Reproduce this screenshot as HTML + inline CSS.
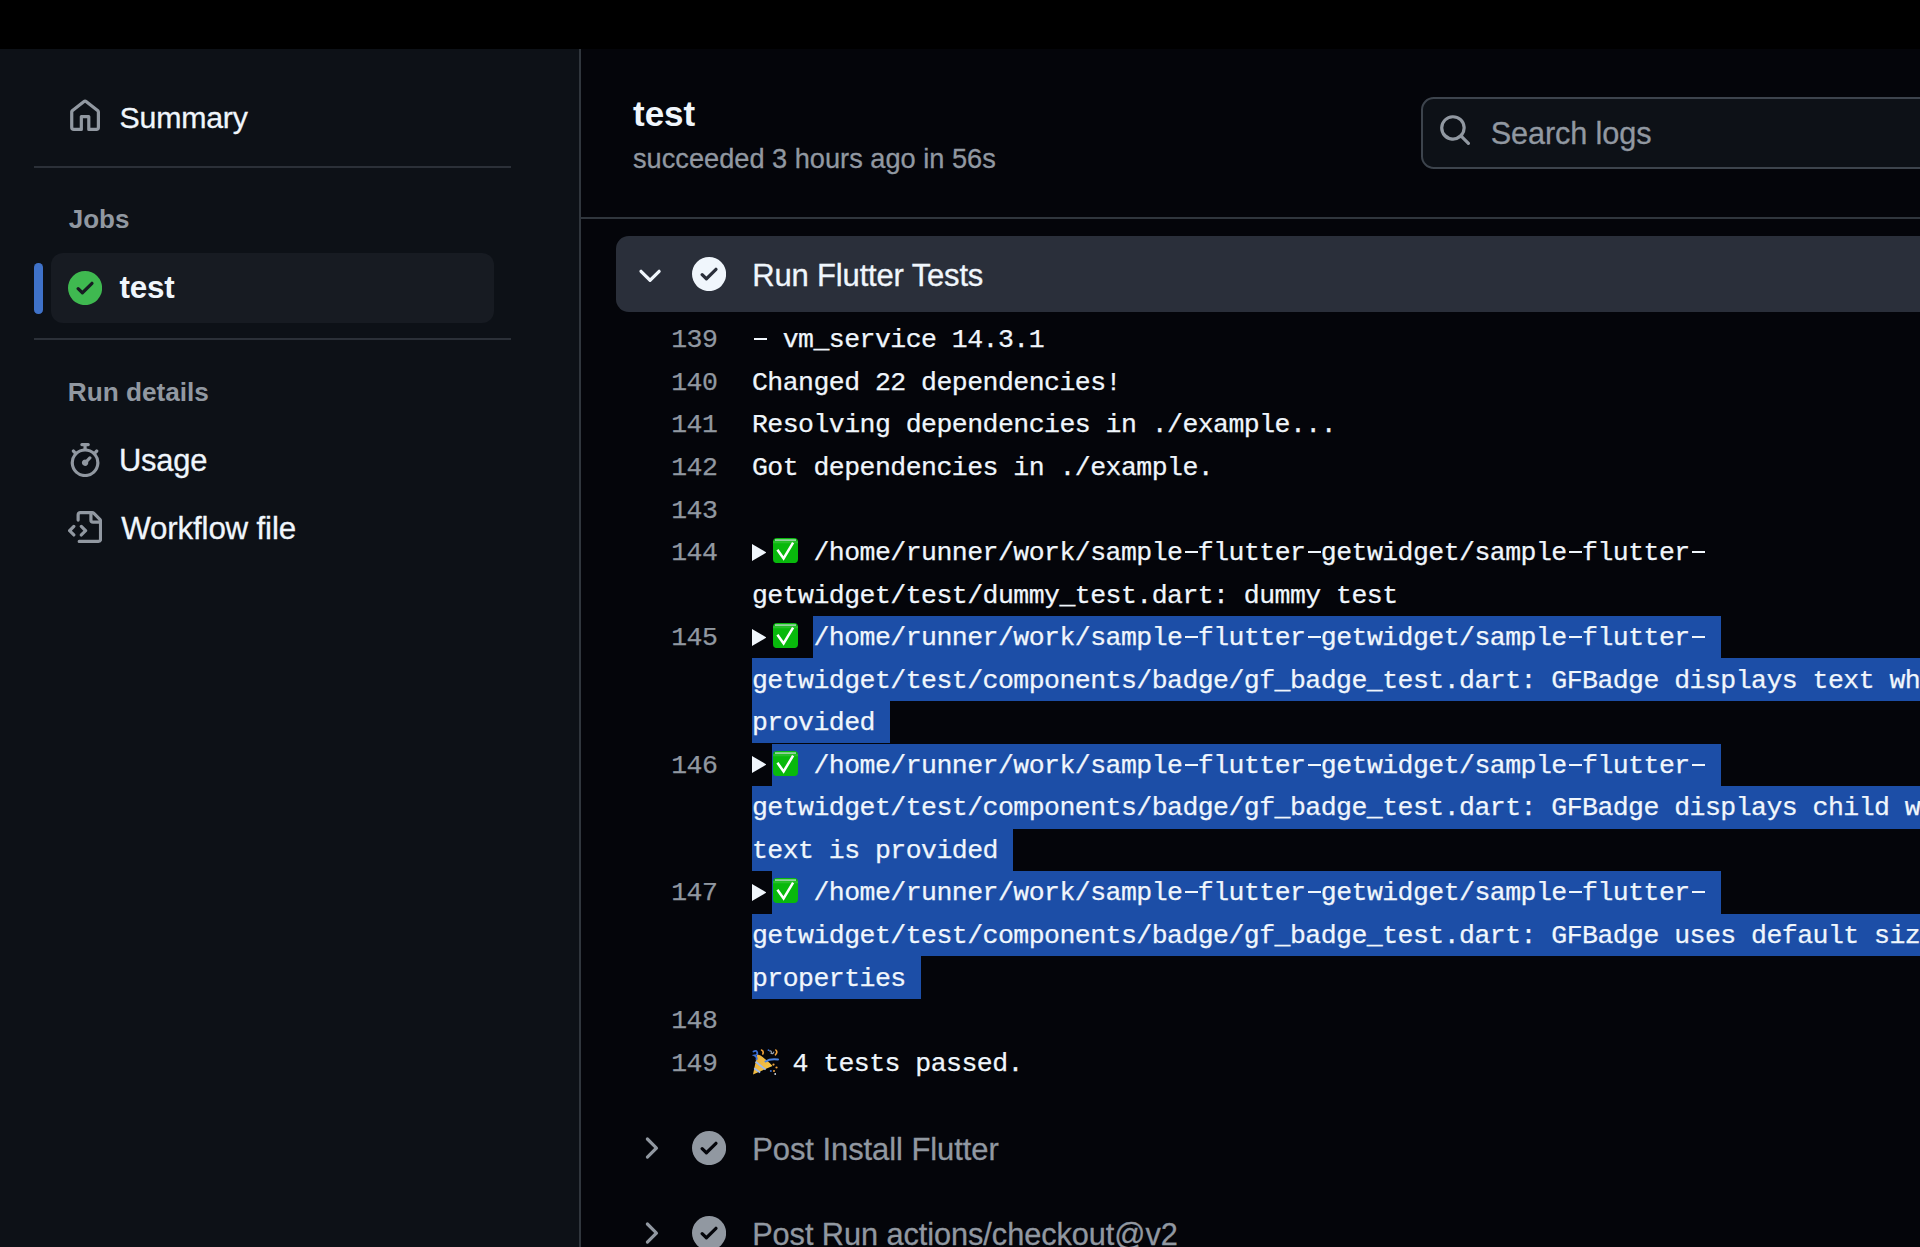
<!DOCTYPE html>
<html><head><meta charset="utf-8"><title>test</title>
<style>
html,body{margin:0;padding:0;}
body{width:1920px;height:1247px;position:relative;overflow:hidden;background:#04050a;font-family:"Liberation Sans", sans-serif;-webkit-font-smoothing:antialiased;}
.t{position:absolute;white-space:pre;}
.S{font-family:"Liberation Sans", sans-serif;-webkit-text-stroke:0.3px currentColor;}
.SB{font-family:"Liberation Sans", sans-serif;}
.M{font-family:"Liberation Mono", monospace;letter-spacing:-0.532px;-webkit-text-stroke:0.25px currentColor;}
.r{position:absolute;}
.h{position:relative;color:transparent;-webkit-text-stroke:0;}
.h::after{content:'';position:absolute;left:2.4px;width:13px;height:2.1px;top:13.0px;background:#f0f6fc;}
</style></head><body>
<div class="r" style="left:0.00px;top:0.00px;width:1920.00px;height:49.00px;background:#000000;border-radius:0px;"></div>
<div class="r" style="left:0.00px;top:49.00px;width:579.00px;height:1198.00px;background:#0d1117;border-radius:0px;"></div>
<div class="r" style="left:579.00px;top:49.00px;width:2.00px;height:1198.00px;background:#30363d;border-radius:0px;"></div>
<svg class="r" style="left:67.90px;top:98.60px;" width="34.13" height="34.13" viewBox="0 0 16 16"><path fill="#9198a1" d="M6.906.664a1.749 1.749 0 0 1 2.187 0l5.25 4.2c.415.332.657.835.657 1.367v7.019A1.75 1.75 0 0 1 13.25 15h-3.5a.75.75 0 0 1-.75-.75V9H7v5.25a.75.75 0 0 1-.75.75h-3.5A1.75 1.75 0 0 1 1 13.25V6.23c0-.531.242-1.034.657-1.366l5.25-4.2Zm1.25 1.171a.25.25 0 0 0-.312 0l-5.25 4.2a.25.25 0 0 0-.094.196v7.019c0 .138.112.25.25.25H5.5V8.25a.75.75 0 0 1 .75-.75h3.5a.75.75 0 0 1 .75.75v5.25h2.75a.25.25 0 0 0 .25-.25V6.23a.25.25 0 0 0-.094-.195Z"/></svg>
<div class="t S" style="left:119.60px;top:98px;font-size:30.3px;line-height:39px;color:#f0f6fc;font-weight:400;letter-spacing:-0.24px;">Summary</div>
<div class="r" style="left:34.00px;top:166.00px;width:477.00px;height:2.00px;background:#2b3038;border-radius:0px;"></div>
<div class="t SB" style="left:68.70px;top:202px;font-size:26px;line-height:34px;color:#9198a1;font-weight:700;">Jobs</div>
<div class="r" style="left:51.30px;top:253.40px;width:442.70px;height:69.60px;background:#171b22;border-radius:12px;"></div>
<div class="r" style="left:34.00px;top:263.00px;width:8.70px;height:50.80px;background:#3f72c9;border-radius:4.3px;"></div>
<svg class="r" style="left:68.00px;top:271.00px;" width="34.13" height="34.13" viewBox="0 0 16 16"><path fill="#3fb950" d="M8 16A8 8 0 1 1 8 0a8 8 0 0 1 0 16Zm3.78-9.72a.751.751 0 0 0-.018-1.042.751.751 0 0 0-1.042-.018L6.75 9.19 5.28 7.72a.751.751 0 0 0-1.042.018.751.751 0 0 0-.018 1.042l2 2a.75.75 0 0 0 1.06 0Z"/></svg>
<div class="t SB" style="left:119.60px;top:267px;font-size:31.4px;line-height:41px;color:#f0f6fc;font-weight:700;letter-spacing:-0.2px;">test</div>
<div class="r" style="left:34.00px;top:338.00px;width:477.00px;height:2.00px;background:#2b3038;border-radius:0px;"></div>
<div class="t SB" style="left:67.75px;top:375px;font-size:26.2px;line-height:34px;color:#9198a1;font-weight:700;">Run details</div>
<svg class="r" style="left:67.90px;top:442.70px;" width="34.13" height="34.13" viewBox="0 0 16 16"><path fill="#9198a1" d="M5.75.75A.75.75 0 0 1 6.5 0h3a.75.75 0 0 1 0 1.5h-.75v1l-.001.041a6.724 6.724 0 0 1 3.464 1.435l.007-.006.75-.75a.749.749 0 0 1 1.275.326.749.749 0 0 1-.215.734l-.75.75-.006.007a6.75 6.75 0 1 1-10.548 0L2.72 5.03l-.75-.75a.751.751 0 0 1 .018-1.042.751.751 0 0 1 1.042-.018l.75.75.007.006A6.72 6.72 0 0 1 7.25 2.541V1.5H6.5a.75.75 0 0 1-.75-.75ZM8 14.5a5.25 5.25 0 1 0-.001-10.501A5.25 5.25 0 0 0 8 14.5Zm.389-6.7 1.33-1.33a.75.75 0 1 1 1.061 1.06L9.45 8.861A1.503 1.503 0 0 1 8 10.75a1.499 1.499 0 1 1 .389-2.95Z"/></svg>
<div class="t S" style="left:119.00px;top:441px;font-size:30.9px;line-height:40px;color:#f0f6fc;font-weight:400;letter-spacing:-0.2px;">Usage</div>
<svg class="r" style="left:67.90px;top:511.00px;" width="34.13" height="34.13" viewBox="0 0 16 16"><path fill="#9198a1" d="M4 1.75C4 .784 4.784 0 5.75 0h5.586c.464 0 .909.184 1.237.513l2.914 2.914c.329.328.513.773.513 1.237v8.586A1.75 1.75 0 0 1 14.25 15h-9a.75.75 0 0 1 0-1.5h9a.25.25 0 0 0 .25-.25V6h-2.75A1.75 1.75 0 0 1 10 4.25V1.5H5.75a.25.25 0 0 0-.25.25v2.5a.75.75 0 0 1-1.5 0Zm1.72 4.97a.75.75 0 0 1 1.06 0l2 2a.75.75 0 0 1 0 1.06l-2 2a.749.749 0 0 1-1.275-.326.749.749 0 0 1 .215-.734l1.47-1.47-1.47-1.47a.75.75 0 0 1 0-1.06ZM3.28 7.78 1.81 9.25l1.47 1.47a.751.751 0 0 1-.018 1.042.751.751 0 0 1-1.042.018l-2-2a.75.75 0 0 1 0-1.06l2-2a.751.751 0 0 1 1.042.018.751.751 0 0 1 .018 1.042Zm8.22-6.218V4.25c0 .138.112.25.25.25h2.688l-.011-.013-2.914-2.914-.013-.011Z"/></svg>
<div class="t S" style="left:121.30px;top:508px;font-size:31.3px;line-height:41px;color:#f0f6fc;font-weight:400;letter-spacing:-0.17px;">Workflow file</div>
<div class="t SB" style="left:633.00px;top:91px;font-size:35px;line-height:46px;color:#f0f6fc;font-weight:700;">test</div>
<div class="t S" style="left:633.00px;top:141px;font-size:27.2px;line-height:35px;color:#9198a1;font-weight:400;">succeeded 3 hours ago in 56s</div>
<div class="r" style="left:1421.00px;top:96.80px;width:700.00px;height:71.80px;background:#0d1117;border-radius:12.8px;box-sizing:border-box;border:2px solid #3d444d;"></div>
<svg class="r" style="left:1437.50px;top:113.30px;" width="34.13" height="34.13" viewBox="0 0 16 16"><path fill="#9198a1" d="M10.68 11.74a6 6 0 0 1-7.922-8.982 6 6 0 0 1 8.982 7.922l3.04 3.04a.749.749 0 0 1-.326 1.275.749.749 0 0 1-.734-.215ZM11.5 7a4.499 4.499 0 1 0-8.997 0A4.499 4.499 0 0 0 11.5 7Z"/></svg>
<div class="t S" style="left:1490.70px;top:114px;font-size:30.7px;line-height:40px;color:#9198a1;font-weight:400;letter-spacing:-0.12px;">Search logs</div>
<div class="r" style="left:581.00px;top:217.00px;width:1339.00px;height:2.00px;background:#30363d;border-radius:0px;"></div>
<div class="r" style="left:616.00px;top:236.00px;width:1400.00px;height:76.00px;background:#2a2f3a;border-radius:12.8px;"></div>
<svg class="r" style="left:632.50px;top:259.00px;" width="34.13" height="34.13" viewBox="0 0 16 16"><path fill="#f0f6fc" d="M12.78 5.22a.749.749 0 0 1 0 1.06l-4.25 4.25a.749.749 0 0 1-1.06 0L3.22 6.28a.749.749 0 0 1 .326-1.275.749.749 0 0 1 .734.215L8 8.939l3.72-3.719a.749.749 0 0 1 1.06 0Z"/></svg>
<svg class="r" style="left:692.00px;top:257.00px;" width="34.13" height="34.13" viewBox="0 0 16 16"><path fill="#f0f6fc" d="M8 16A8 8 0 1 1 8 0a8 8 0 0 1 0 16Zm3.78-9.72a.751.751 0 0 0-.018-1.042.751.751 0 0 0-1.042-.018L6.75 9.19 5.28 7.72a.751.751 0 0 0-1.042.018.751.751 0 0 0-.018 1.042l2 2a.75.75 0 0 0 1.06 0Z"/></svg>
<div class="t S" style="left:752.30px;top:256px;font-size:31px;line-height:40px;color:#f0f6fc;font-weight:400;letter-spacing:-0.17px;">Run Flutter Tests</div>
<div class="t M" style="left:600.00px;top:323px;font-size:26.5px;line-height:34px;color:#9198a1;font-weight:400;width:117.3px;text-align:right;">139</div>
<div class="t M" style="left:752.00px;top:323px;font-size:26.5px;line-height:34px;color:#f0f6fc;font-weight:400;"><span class="h">-</span> vm_service 14.3.1</div>
<div class="t M" style="left:600.00px;top:366px;font-size:26.5px;line-height:34px;color:#9198a1;font-weight:400;width:117.3px;text-align:right;">140</div>
<div class="t M" style="left:752.00px;top:366px;font-size:26.5px;line-height:34px;color:#f0f6fc;font-weight:400;">Changed 22 dependencies!</div>
<div class="t M" style="left:600.00px;top:408px;font-size:26.5px;line-height:34px;color:#9198a1;font-weight:400;width:117.3px;text-align:right;">141</div>
<div class="t M" style="left:752.00px;top:408px;font-size:26.5px;line-height:34px;color:#f0f6fc;font-weight:400;">Resolving dependencies in ./example...</div>
<div class="t M" style="left:600.00px;top:451px;font-size:26.5px;line-height:34px;color:#9198a1;font-weight:400;width:117.3px;text-align:right;">142</div>
<div class="t M" style="left:752.00px;top:451px;font-size:26.5px;line-height:34px;color:#f0f6fc;font-weight:400;">Got dependencies in ./example.</div>
<div class="t M" style="left:600.00px;top:494px;font-size:26.5px;line-height:34px;color:#9198a1;font-weight:400;width:117.3px;text-align:right;">143</div>
<div class="t M" style="left:600.00px;top:536px;font-size:26.5px;line-height:34px;color:#9198a1;font-weight:400;width:117.3px;text-align:right;">144</div>
<svg class="r" style="left:751.7px;top:543.50px" width="14.5" height="17" viewBox="0 0 14.5 17"><path fill="#f0f6fc" d="M0 0L14.5 8.5L0 17Z"/></svg>
<svg class="r" style="left:772.8px;top:538.00px" width="25" height="25.2" viewBox="0 0 25 25"><rect x="0" y="0" width="25" height="25" rx="4" fill="#08b90c"/><rect x="2" y="1.2" width="21" height="1.6" fill="#d9dde6" opacity="0.75"/><rect x="0" y="3" width="25" height="2.2" fill="#3cc43e" opacity="0.6"/><path d="M4.4 11.6L10.6 20.4L20.1 4.6" stroke="#fff" stroke-width="2.5" fill="none" stroke-linejoin="miter"/></svg>
<div class="t M" style="left:813.50px;top:536px;font-size:26.5px;line-height:34px;color:#f0f6fc;font-weight:400;">/home/runner/work/sample<span class="h">-</span>flutter<span class="h">-</span>getwidget/sample<span class="h">-</span>flutter<span class="h">-</span></div>
<div class="t M" style="left:752.00px;top:579px;font-size:26.5px;line-height:34px;color:#f0f6fc;font-weight:400;">getwidget/test/dummy_test.dart: dummy test</div>
<div class="r" style="left:813.00px;top:615.85px;width:908.00px;height:42.55px;background:#1c4ea7;border-radius:0px;"></div>
<div class="t M" style="left:600.00px;top:621px;font-size:26.5px;line-height:34px;color:#9198a1;font-weight:400;width:117.3px;text-align:right;">145</div>
<svg class="r" style="left:751.7px;top:628.60px" width="14.5" height="17" viewBox="0 0 14.5 17"><path fill="#f0f6fc" d="M0 0L14.5 8.5L0 17Z"/></svg>
<svg class="r" style="left:772.8px;top:623.10px" width="25" height="25.2" viewBox="0 0 25 25"><rect x="0" y="0" width="25" height="25" rx="4" fill="#08b90c"/><rect x="2" y="1.2" width="21" height="1.6" fill="#d9dde6" opacity="0.75"/><rect x="0" y="3" width="25" height="2.2" fill="#3cc43e" opacity="0.6"/><path d="M4.4 11.6L10.6 20.4L20.1 4.6" stroke="#fff" stroke-width="2.5" fill="none" stroke-linejoin="miter"/></svg>
<div class="t M" style="left:813.50px;top:621px;font-size:26.5px;line-height:34px;color:#f0f6fc;font-weight:400;">/home/runner/work/sample<span class="h">-</span>flutter<span class="h">-</span>getwidget/sample<span class="h">-</span>flutter<span class="h">-</span></div>
<div class="r" style="left:752.00px;top:658.40px;width:1168.00px;height:42.55px;background:#1c4ea7;border-radius:0px;"></div>
<div class="t M" style="left:752.00px;top:664px;font-size:26.5px;line-height:34px;color:#f0f6fc;font-weight:400;">getwidget/test/components/badge/gf_badge_test.dart: GFBadge displays text when</div>
<div class="r" style="left:752.00px;top:700.95px;width:138.30px;height:42.55px;background:#1c4ea7;border-radius:0px;"></div>
<div class="t M" style="left:752.00px;top:706px;font-size:26.5px;line-height:34px;color:#f0f6fc;font-weight:400;">provided</div>
<div class="r" style="left:772.40px;top:743.50px;width:948.60px;height:42.55px;background:#1c4ea7;border-radius:0px;"></div>
<div class="t M" style="left:600.00px;top:749px;font-size:26.5px;line-height:34px;color:#9198a1;font-weight:400;width:117.3px;text-align:right;">146</div>
<svg class="r" style="left:751.7px;top:756.25px" width="14.5" height="17" viewBox="0 0 14.5 17"><path fill="#f0f6fc" d="M0 0L14.5 8.5L0 17Z"/></svg>
<svg class="r" style="left:772.8px;top:750.75px" width="25" height="25.2" viewBox="0 0 25 25"><rect x="0" y="0" width="25" height="25" rx="4" fill="#08b90c"/><rect x="2" y="1.2" width="21" height="1.6" fill="#d9dde6" opacity="0.75"/><rect x="0" y="3" width="25" height="2.2" fill="#3cc43e" opacity="0.6"/><path d="M4.4 11.6L10.6 20.4L20.1 4.6" stroke="#fff" stroke-width="2.5" fill="none" stroke-linejoin="miter"/></svg>
<div class="t M" style="left:813.50px;top:749px;font-size:26.5px;line-height:34px;color:#f0f6fc;font-weight:400;">/home/runner/work/sample<span class="h">-</span>flutter<span class="h">-</span>getwidget/sample<span class="h">-</span>flutter<span class="h">-</span></div>
<div class="r" style="left:752.00px;top:786.05px;width:1168.00px;height:42.55px;background:#1c4ea7;border-radius:0px;"></div>
<div class="t M" style="left:752.00px;top:791px;font-size:26.5px;line-height:34px;color:#f0f6fc;font-weight:400;">getwidget/test/components/badge/gf_badge_test.dart: GFBadge displays child when</div>
<div class="r" style="left:752.00px;top:828.60px;width:261.30px;height:42.55px;background:#1c4ea7;border-radius:0px;"></div>
<div class="t M" style="left:752.00px;top:834px;font-size:26.5px;line-height:34px;color:#f0f6fc;font-weight:400;">text is provided</div>
<div class="r" style="left:772.40px;top:871.15px;width:948.60px;height:42.55px;background:#1c4ea7;border-radius:0px;"></div>
<div class="t M" style="left:600.00px;top:876px;font-size:26.5px;line-height:34px;color:#9198a1;font-weight:400;width:117.3px;text-align:right;">147</div>
<svg class="r" style="left:751.7px;top:883.90px" width="14.5" height="17" viewBox="0 0 14.5 17"><path fill="#f0f6fc" d="M0 0L14.5 8.5L0 17Z"/></svg>
<svg class="r" style="left:772.8px;top:878.40px" width="25" height="25.2" viewBox="0 0 25 25"><rect x="0" y="0" width="25" height="25" rx="4" fill="#08b90c"/><rect x="2" y="1.2" width="21" height="1.6" fill="#d9dde6" opacity="0.75"/><rect x="0" y="3" width="25" height="2.2" fill="#3cc43e" opacity="0.6"/><path d="M4.4 11.6L10.6 20.4L20.1 4.6" stroke="#fff" stroke-width="2.5" fill="none" stroke-linejoin="miter"/></svg>
<div class="t M" style="left:813.50px;top:876px;font-size:26.5px;line-height:34px;color:#f0f6fc;font-weight:400;">/home/runner/work/sample<span class="h">-</span>flutter<span class="h">-</span>getwidget/sample<span class="h">-</span>flutter<span class="h">-</span></div>
<div class="r" style="left:752.00px;top:913.70px;width:1168.00px;height:42.55px;background:#1c4ea7;border-radius:0px;"></div>
<div class="t M" style="left:752.00px;top:919px;font-size:26.5px;line-height:34px;color:#f0f6fc;font-weight:400;">getwidget/test/components/badge/gf_badge_test.dart: GFBadge uses default size</div>
<div class="r" style="left:752.00px;top:956.25px;width:169.10px;height:42.55px;background:#1c4ea7;border-radius:0px;"></div>
<div class="t M" style="left:752.00px;top:962px;font-size:26.5px;line-height:34px;color:#f0f6fc;font-weight:400;">properties</div>
<div class="t M" style="left:600.00px;top:1004px;font-size:26.5px;line-height:34px;color:#9198a1;font-weight:400;width:117.3px;text-align:right;">148</div>
<div class="t M" style="left:600.00px;top:1047px;font-size:26.5px;line-height:34px;color:#9198a1;font-weight:400;width:117.3px;text-align:right;">149</div>
<svg class="r" style="left:751.7px;top:1049.00px" width="27" height="26" viewBox="0 0 27 26"><defs><linearGradient id="pg" x1="0" y1="0" x2="1" y2="1"><stop offset="0" stop-color="#e9a93a"/><stop offset="1" stop-color="#f7cf4a"/></linearGradient></defs><path fill="url(#pg)" d="M1 25.5L5.2 5.2Q9 6 13 10Q17.5 13.5 20.5 17Z"/><path fill="none" stroke="#9db9ec" stroke-width="1.8" d="M3.6 12.8L13.6 20.6M2.2 19.2L8.2 23.4"/><path fill="none" stroke="#3b6fd6" stroke-width="1.8" stroke-linecap="round" d="M1.5 2.5Q4.5 0.8 5.2 3.5Q5.8 6 2.5 6.5Q5.5 8 4.5 10.5"/><path fill="none" stroke="#f0a23a" stroke-width="1.6" stroke-linecap="round" d="M9.5 1Q12 2.2 10.8 5"/><path fill="none" stroke="#9aa3b0" stroke-width="1.2" stroke-linecap="round" d="M17.5 2Q20 1.5 19.2 4.5Q21.5 5 21.8 3"/><path fill="none" stroke="#f0a23a" stroke-width="1.6" stroke-linecap="round" d="M23.8 1Q26 3 23.5 5.8"/><path fill="none" stroke="#4a82e0" stroke-width="2" stroke-linecap="round" d="M13.5 12.5Q18 9.5 26 10.5"/><circle cx="21.5" cy="15.6" r="1.1" fill="#f0a23a"/><circle cx="24.5" cy="18.5" r="1.1" fill="#f0a23a"/><circle cx="22" cy="22" r="1" fill="#f0a23a"/><circle cx="18.8" cy="22" r="1" fill="#3b6fd6"/><circle cx="23.2" cy="25" r="0.9" fill="#d8dce4"/><circle cx="16.5" cy="1.2" r="0.9" fill="#3b6fd6"/></svg>
<div class="t M" style="left:792.40px;top:1047px;font-size:26.5px;line-height:34px;color:#f0f6fc;font-weight:400;">4 tests passed.</div>
<svg class="r" style="left:633.00px;top:1131.00px;" width="34.13" height="34.13" viewBox="0 0 16 16"><path fill="#9198a1" d="M6.22 3.22a.75.75 0 0 1 1.06 0l4.25 4.25a.75.75 0 0 1 0 1.06l-4.25 4.25a.751.751 0 0 1-1.042-.018.751.751 0 0 1-.018-1.042L9.94 8 6.22 4.28a.75.75 0 0 1 0-1.06Z"/></svg>
<svg class="r" style="left:692.00px;top:1131.00px;" width="34.13" height="34.13" viewBox="0 0 16 16"><path fill="#9198a1" d="M8 16A8 8 0 1 1 8 0a8 8 0 0 1 0 16Zm3.78-9.72a.751.751 0 0 0-.018-1.042.751.751 0 0 0-1.042-.018L6.75 9.19 5.28 7.72a.751.751 0 0 0-1.042.018.751.751 0 0 0-.018 1.042l2 2a.75.75 0 0 0 1.06 0Z"/></svg>
<div class="t S" style="left:752.20px;top:1130px;font-size:30.95px;line-height:40px;color:#9198a1;font-weight:400;letter-spacing:-0.05px;">Post Install Flutter</div>
<svg class="r" style="left:633.00px;top:1216.30px;" width="34.13" height="34.13" viewBox="0 0 16 16"><path fill="#9198a1" d="M6.22 3.22a.75.75 0 0 1 1.06 0l4.25 4.25a.75.75 0 0 1 0 1.06l-4.25 4.25a.751.751 0 0 1-1.042-.018.751.751 0 0 1-.018-1.042L9.94 8 6.22 4.28a.75.75 0 0 1 0-1.06Z"/></svg>
<svg class="r" style="left:692.00px;top:1216.30px;" width="34.13" height="34.13" viewBox="0 0 16 16"><path fill="#9198a1" d="M8 16A8 8 0 1 1 8 0a8 8 0 0 1 0 16Zm3.78-9.72a.751.751 0 0 0-.018-1.042.751.751 0 0 0-1.042-.018L6.75 9.19 5.28 7.72a.751.751 0 0 0-1.042.018.751.751 0 0 0-.018 1.042l2 2a.75.75 0 0 0 1.06 0Z"/></svg>
<div class="t S" style="left:752.20px;top:1215px;font-size:30.7px;line-height:40px;color:#9198a1;font-weight:400;letter-spacing:-0.05px;">Post Run actions/checkout@v2</div>
</body></html>
